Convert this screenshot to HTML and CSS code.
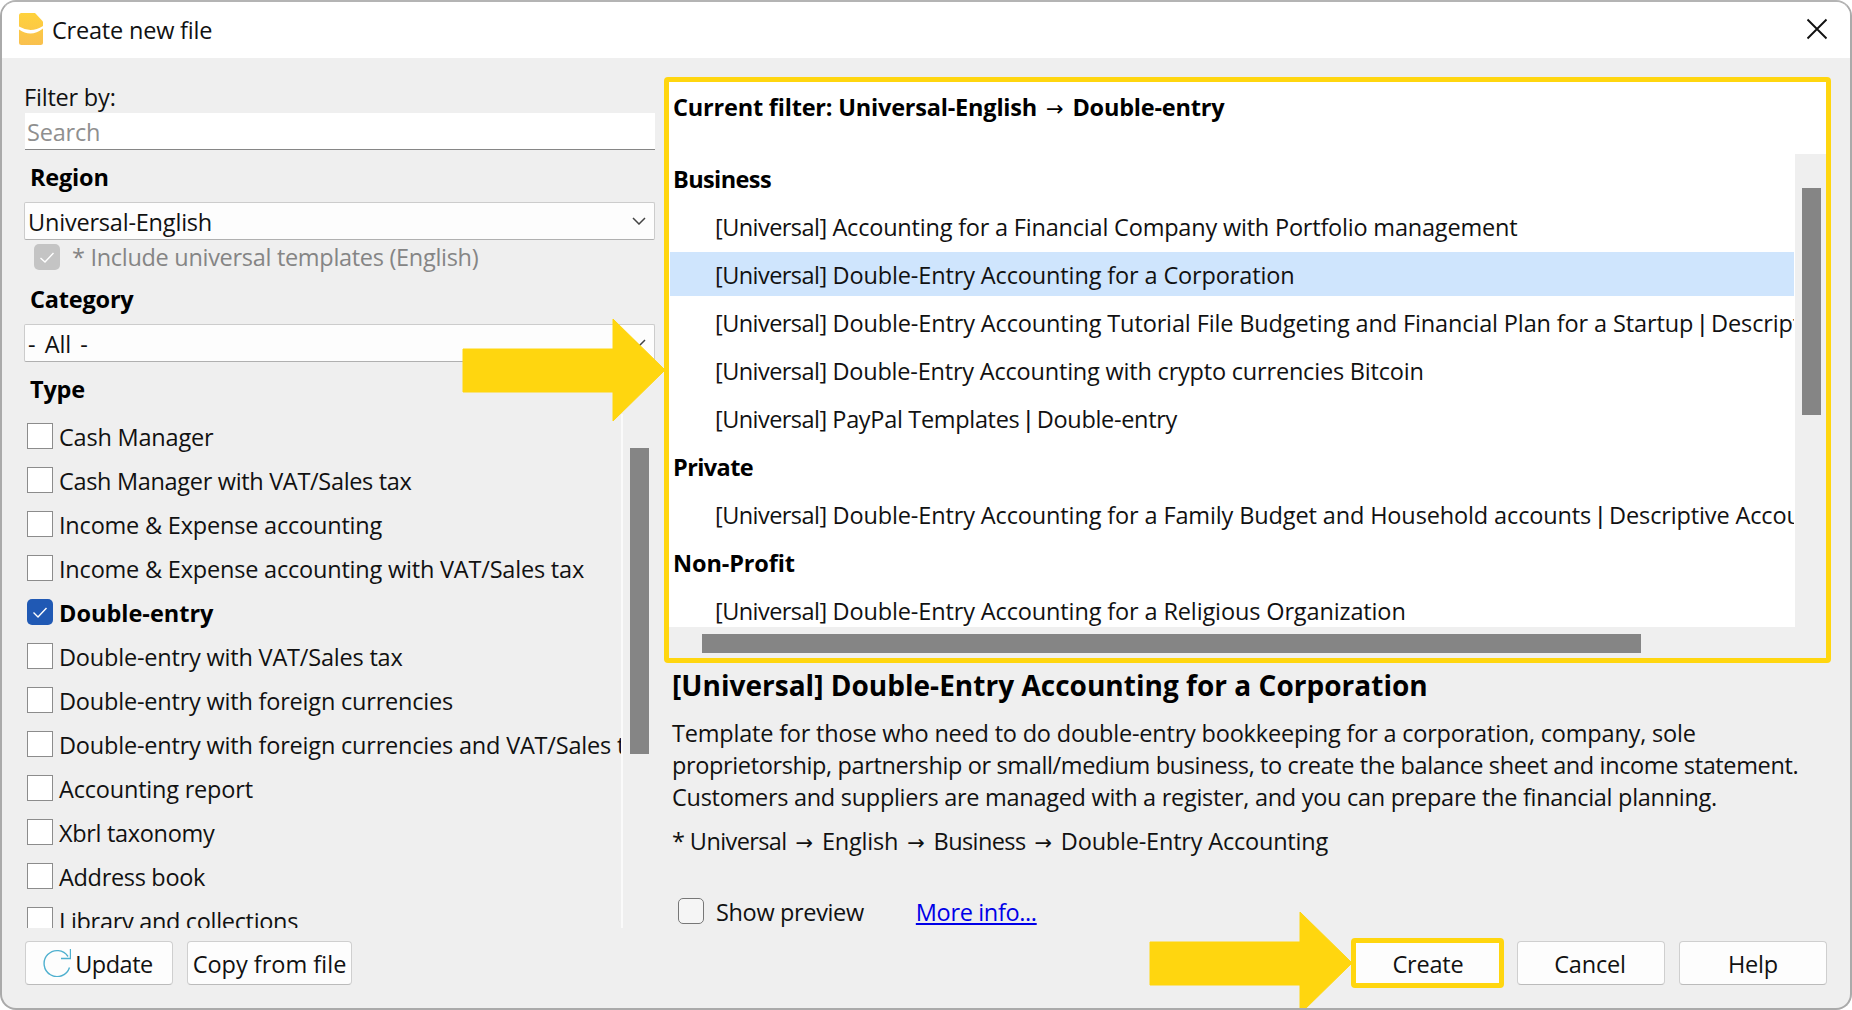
FILE: index.html
```html
<!DOCTYPE html>
<html lang="en">
<head>
<meta charset="utf-8">
<title>Create new file</title>
<link rel="stylesheet" href="styles.css">
</head>
<body>
<div class="dialog">
  <header class="titlebar">
    <svg class="logo" width="24" height="32" viewBox="0 0 24 32">
      <defs><linearGradient id="g" x1="0" y1="0" x2="0" y2="1"><stop offset="0" stop-color="#ffd23c"/><stop offset="1" stop-color="#f9c04f"/></linearGradient></defs>
      <path d="M2.5 0H16L24 8.500V29.500Q24 32 21.500 32H2.500Q0 32 0 29.500V2.500Q0 0 2.500 0Z" fill="url(#g)"/>
      <path d="M0 13.500Q12 20.500 24 13V15.500Q12 25 0 16.500Z" fill="#fff"/>
    </svg>
    <span class="t-title">Create new file</span>
    <svg class="close" width="22" height="22" viewBox="0 0 22 22"><path d="M1.500 1.500L20.500 20.500M20.500 1.500L1.500 20.500" stroke="#111" stroke-width="1.900" fill="none"/></svg>
  </header>
  <main class="content">
    <section class="filters">
      <div class="filter-label">Filter by:</div>
      <div class="search">Search</div>
      <div class="heading">Region</div>
      <div class="select"><span>Universal-English</span><svg class="chev" width="14" height="8" viewBox="0 0 14 8"><path d="M1 1L7 7L13 1"/></svg></div>
      <div class="include"><span class="box locked"><svg width="26" height="26" viewBox="0 0 26 26"><path d="M6.500 14L11 18L19.500 9"/></svg></span><span class="t-include">* Include universal templates (English)</span></div>
      <div class="heading cat">Category</div>
      <div class="select"><span class="t-all">- All -</span><svg class="chev" width="14" height="8" viewBox="0 0 14 8"><path d="M1 1L7 7L13 1"/></svg></div>
      <div class="heading type">Type</div>
      <div class="types">
        <ul class="type-list">
          <li><span class="box"></span><span>Cash Manager</span></li>
          <li><span class="box"></span><span class="snug">Cash Manager with VAT/Sales tax</span></li>
          <li><span class="box"></span><span>Income &amp; Expense accounting</span></li>
          <li><span class="box"></span><span>Income &amp; Expense accounting with VAT/Sales tax</span></li>
          <li class="on"><span class="box checked"><svg width="26" height="26" viewBox="0 0 26 26"><path d="M6.500 13.500L11 18L19.500 9"/></svg></span><span>Double-entry</span></li>
          <li><span class="box"></span><span>Double-entry with VAT/Sales tax</span></li>
          <li><span class="box"></span><span>Double-entry with foreign currencies</span></li>
          <li><span class="box"></span><span>Double-entry with foreign currencies and VAT/Sales tax</span></li>
          <li><span class="box"></span><span>Accounting report</span></li>
          <li><span class="box"></span><span class="snug">Xbrl taxonomy</span></li>
          <li><span class="box"></span><span class="snug">Address book</span></li>
          <li><span class="box"></span><span class="snug">Library and collections</span></li>
        </ul>
        <div class="type-scroll"><div class="thumb"></div></div>
      </div>
      <div class="actions">
        <div class="btn update"><svg width="28" height="28" viewBox="0 0 28 28"><path d="M26.500 18.500A13 13 0 1 1 25 7.500M27.500 0V9.500H18" fill="none" stroke="#4fb0cf" stroke-width="1.400"/></svg><span>Update</span></div>
        <div class="btn copy"><span>Copy from file</span></div>
      </div>
    </section>
    <section class="templates">
      <div class="panel">
        <div class="current">Current filter: Universal-English <span class="arr">→</span> Double-entry</div>
        <div class="view">
          <ul class="tree">
            <li class="group tight">Business</li>
            <li><span class="tag">[Universal]</span> Accounting for a Financial Company with Portfolio management</li>
            <li class="selected wide"><span class="tag">[Universal]</span> Double-Entry Accounting for a Corporation</li>
            <li class="wide"><span class="tag">[Universal]</span> Double-Entry Accounting Tutorial File Budgeting and Financial Plan for a Startup <span class="bar">|</span> Descriptive</li>
            <li><span class="tag">[Universal]</span> Double-Entry Accounting with crypto currencies Bitcoin</li>
            <li class="snug"><span class="tag">[Universal]</span> PayPal Templates <span class="bar">|</span> Double-entry</li>
            <li class="group tight">Private</li>
            <li class="wide"><span class="tag">[Universal]</span> Double-Entry Accounting for a Family Budget and Household accounts <span class="bar">|</span> Descriptive Accounts</li>
            <li class="group wide">Non-Profit</li>
            <li class="wide"><span class="tag">[Universal]</span> Double-Entry Accounting for a Religious Organization</li>
          </ul>
          <div class="vscroll"><div class="thumb"></div></div>
        </div>
        <div class="hscroll"><div class="thumb"></div></div>
      </div>
      <h2>[Universal] Double-Entry Accounting for a Corporation</h2>
      <p class="desc">Template for those who need to do double-entry bookkeeping for a corporation, company, sole<br><span class="line2">proprietorship, partnership or small/medium business, to create the balance sheet and income statement.</span><br><span class="line3">Customers and suppliers are managed with a register, and you can prepare the financial planning.</span></p>
      <p class="crumbs"><span class="tight">* Universal</span> <span class="arr">→</span> English <span class="arr">→</span> <span class="tight">Business</span> <span class="arr">→</span> Double-Entry Accounting</p>
      <div class="preview"><span class="box round"></span><span class="t-show">Show preview</span><a class="more">More info...</a></div>
      <div class="buttons">
        <div class="btn create"><span>Create</span></div>
        <div class="btn cancel"><span>Cancel</span></div>
        <div class="btn help"><span>Help</span></div>
      </div>
    </section>
  </main>
  <svg class="pointer to-list" width="204" height="104" viewBox="0 0 204 104"><path d="M1 31H151V1L203 52L151 103V74H1Z"/></svg>
  <svg class="pointer to-create" width="204" height="104" viewBox="0 0 204 104"><path d="M1 31H151V1L203 52L151 103V74H1Z"/></svg>
</div>
</body>
</html>
```
FILE: styles.css
```css
* { box-sizing: border-box; }
body { margin: 0; background: #fff; width: 1852px; height: 1010px; overflow: hidden; }
.dialog {
  position: relative; width: 1852px; height: 1010px; overflow: hidden;
  border: 2px solid #aaa; border-top-color: #b4b4b4; border-radius: 16px; background: #efefef;
  font: 23.5px/32px "Open Sans", "Noto Sans", sans-serif; color: #111; white-space: nowrap;
  letter-spacing: -0.2px;
}
ul, p, h2 { margin: 0; padding: 0; list-style: none; }
.titlebar { height: 56px; background: #fff; display: flex; align-items: center; padding: 0 22px 0 17px; }
.logo { margin-top: -2px; margin-right: 9px; }
.close { margin-left: auto; margin-top: -2px; }
.content { display: flex; height: 950px; }
.filters { width: 662px; padding: 24px 9px 0 22px; display: flex; flex-direction: column; }
.filter-label { height: 31px; line-height: 30px; }
.search { height: 37px; margin-left: 1px; padding-left: 2px; background: #fff; border-bottom: 1px solid #868686; color: #8f8f8f; line-height: 38px; }
.heading { font-weight: 700; padding-left: 6px; height: 52px; line-height: 55px; color: #000; }
.select { height: 38px; border: 1px solid #ccc; border-bottom-color: #b0b0b0; background: #fdfdfd; border-radius: 2px; display: flex; align-items: center; justify-content: space-between; padding: 0 8px 0 3px; }
.select span { padding-top: 2px; }
.t-all { word-spacing: 3.5px; }
.chev path { fill: none; stroke: #444; stroke-width: 1.5; }
.include { height: 35px; padding: 0 0 2px 10px; display: flex; align-items: center; color: #858585; gap: 12px; }
.t-include { letter-spacing: -0.3px; }
.snug { letter-spacing: -0.32px; }
.tight { letter-spacing: -0.6px; }
.wide { letter-spacing: -0.13px; }
.box { width: 26px; height: 26px; flex: none; border: 1px solid #8c8c8c; background: #fff; }
.box svg { display: block; }
.box path { fill: none; stroke: #fff; stroke-width: 1.4; }
.locked { border: 0; border-radius: 5px; background: #c4c4c4; }
.cat { height: 49px; line-height: 49px; }
.type { height: 52px; line-height: 54px; }
.types { display: flex; height: 514px; }
.type-list { width: 599px; overflow: hidden; border-right: 2px solid #fafafa; }
.type-list li { height: 44px; display: flex; align-items: center; padding-left: 3px; gap: 6px; }
.type-list li > span:last-child { padding-top: 2px; }
.checked { border: 0; border-radius: 5px; background: #2059b4; }
.on { font-weight: 700; color: #000; letter-spacing: 0; }
.thumb { background: #858585; }
.type-scroll { padding: 34px 0 0 7px; }
.type-scroll .thumb { width: 19px; height: 306px; }
.actions { display: flex; gap: 14px; margin-top: 13px; padding-left: 1px; }
.btn { height: 44px; border: 1px solid #cfcfcf; border-bottom-color: #bbb; border-radius: 4px; background: #fdfdfd; display: flex; align-items: center; justify-content: center; }
.btn span { padding-top: 2px; }
.update { width: 148px; gap: 4px; padding-right: 2px; letter-spacing: -0.5px; }
.copy { width: 165px; letter-spacing: 0; }
.templates { width: 1186px; padding-top: 19px; display: flex; flex-direction: column; }
.panel { width: 1167px; height: 586px; border: 5px solid #ffd60f; border-radius: 4px; background: #fff; }
.current { height: 72px; line-height: 50px; padding-left: 4px; font-weight: 700; color: #000; letter-spacing: -0.2px; }
.arr { display: inline-block; width: 23.5px; font: 21px/20px "DejaVu Sans", sans-serif; letter-spacing: 0; text-align: center; }
.view { display: flex; height: 473px; }
.tree { width: 1126px; padding: 2px 1px 0 1px; overflow: hidden; }
.tree li { height: 48px; line-height: 46px; padding-left: 45px; overflow: hidden; }
.tree .group { padding-left: 3px; font-weight: 700; color: #000; }
.tree .selected { height: 44px; margin-bottom: 4px; background: #cfe5fd; }
.tree .tag { letter-spacing: -0.55px; }
.bar { font-family: "Liberation Sans", sans-serif; }
.vscroll { flex: 1; background: #efefef; padding: 34px 0 0 7px; }
.vscroll .thumb { width: 19px; height: 227px; }
.hscroll { height: 31px; background: #efefef; padding: 7px 0 0 33px; }
.hscroll .thumb { width: 939px; height: 19px; }
h2 { font-size: 28px; line-height: 40px; height: 54px; padding: 2px 0 0 8px; color: #000; letter-spacing: 0.02px; }
.desc { padding-left: 8px; height: 108px; }
.line2 { letter-spacing: -0.37px; }
.line3 { letter-spacing: -0.285px; }
.crumbs { padding-left: 8px; height: 56px; }
.preview { display: flex; align-items: center; height: 36px; padding-left: 14px; margin-top: 12px; letter-spacing: -0.35px; }
.t-show, .more { padding-top: 2px; }
.round { border: 1.500px solid #777; border-radius: 5px; background: #f5f5f5; margin-right: 12px; }
.more { color: #0000e8; text-decoration: underline; margin-left: 52px; }
.buttons { display: flex; padding-left: 687px; margin-top: 9px; align-items: center; }
.create { width: 153px; height: 50px; border: 5px solid #ffd60f; margin-right: 13px; padding-left: 1px; }
.cancel { width: 148px; margin-right: 14px; padding-right: 2px; }
.help { width: 148px; }
.pointer { position: absolute; }
.pointer path { fill: #ffd60f; stroke: #ffd60f; stroke-width: 1; stroke-linejoin: round; }
.to-list { left: 460px; top: 316px; }
.to-create { left: 1147px; top: 909px; }
```
